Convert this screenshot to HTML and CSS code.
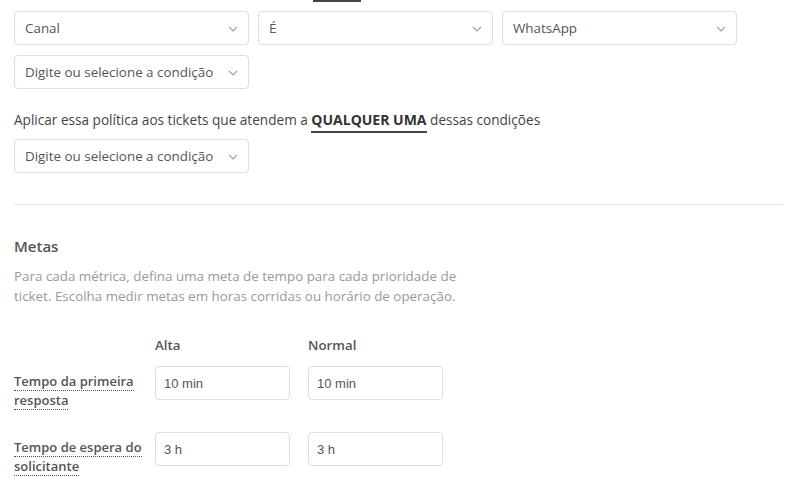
FILE: index.html
```html
<!DOCTYPE html>
<html lang="pt-BR">
<head>
<meta charset="utf-8">
<title>Política de SLA</title>
<link rel="stylesheet" href="styles.css">
</head>
<body>
<div class="page">
  <div class="cut-underline"></div>

  <div class="row first">
    <div class="select"><span>Canal</span><svg class="chev" viewBox="0 0 10 6" width="10" height="6"><path d="M1 1l4 4 4-4" fill="none" stroke="#a0a0a0" stroke-width="1.1"/></svg></div>
    <div class="select"><span>É</span><svg class="chev" viewBox="0 0 10 6" width="10" height="6"><path d="M1 1l4 4 4-4" fill="none" stroke="#a0a0a0" stroke-width="1.1"/></svg></div>
    <div class="select"><span>WhatsApp</span><svg class="chev" viewBox="0 0 10 6" width="10" height="6"><path d="M1 1l4 4 4-4" fill="none" stroke="#a0a0a0" stroke-width="1.1"/></svg></div>
  </div>
  <div class="row">
    <div class="select"><span>Digite ou selecione a condição</span><svg class="chev" viewBox="0 0 10 6" width="10" height="6"><path d="M1 1l4 4 4-4" fill="none" stroke="#a0a0a0" stroke-width="1.1"/></svg></div>
  </div>

  <p class="cond-title">Aplicar essa política aos tickets que atendem a <span class="emph">QUALQUER UMA</span> dessas condições</p>
  <div class="row tight">
    <div class="select"><span>Digite ou selecione a condição</span><svg class="chev" viewBox="0 0 10 6" width="10" height="6"><path d="M1 1l4 4 4-4" fill="none" stroke="#a0a0a0" stroke-width="1.1"/></svg></div>
  </div>

  <hr class="divider">

  <h2 class="section-title">Metas</h2>
  <p class="section-desc">Para cada métrica, defina uma meta de tempo para cada prioridade de ticket. Escolha medir metas em horas corridas ou horário de operação.</p>

  <div class="goals">
    <div class="goal-row head">
      <div class="metric"></div>
      <div class="col-head">Alta</div>
      <div class="col-head">Normal</div>
    </div>
    <div class="goal-row">
      <div class="metric"><span class="dotted">Tempo da primeira resposta</span></div>
      <div class="input">10 min</div>
      <div class="input">10 min</div>
    </div>
    <div class="goal-row">
      <div class="metric"><span class="dotted">Tempo de espera do solicitante</span></div>
      <div class="input">3 h</div>
      <div class="input">3 h</div>
    </div>
  </div>
</div>
</body>
</html>
```

FILE: styles.css
```css
html, body {
  margin: 0;
  padding: 0;
  background: #fff;
}
body {
  font-family: "Open Sans", "Noto Sans", sans-serif;
  color: #555;
  overflow: hidden;
}
.page {
  padding: 0 11px 0 14px;
}
.cut-underline {
  width: 48px;
  height: 2px;
  margin-left: 299px;
  background: #444;
}
.cond-title {
  margin: 20px 0 0 0;
  font-size: 13.6px;
  line-height: 22px;
  color: #444;
}
.emph {
  font-weight: 700;
  font-size: 14px;
  color: #333;
  border-bottom: 2px solid #444;
  padding-bottom: 2px;
}
.row {
  display: flex;
  gap: 9px;
  margin-top: 10px;
}
.row.first {
  margin-top: 9px;
}
.row.tight {
  margin-top: 8px;
}
.select {
  box-sizing: border-box;
  width: 235px;
  height: 34px;
  border: 1px solid #dddddd;
  border-radius: 4px;
  display: flex;
  align-items: center;
  justify-content: space-between;
  padding: 0 10px 0 10px;
  font-size: 13.4px;
  color: #555;
}
.chev {
  display: block;
  margin-top: 1px;
}
.divider {
  border: 0;
  border-top: 1px solid #e6e6e6;
  margin: 31px 0 0 0;
}
.section-title {
  margin: 29px 0 0 0;
  font-size: 15px;
  font-weight: 600;
  line-height: 24px;
  color: #555;
}
.section-desc {
  margin: 8px 0 0 0;
  width: 450px;
  font-size: 13.4px;
  line-height: 20px;
  color: #999;
}
.goals {
  margin-top: 29px;
}
.goal-row {
  display: flex;
  margin-bottom: 22px;
}
.goal-row.head {
  margin-bottom: 11px;
}
.metric {
  box-sizing: border-box;
  width: 141px;
  padding: 6px 4px 0 0;
  font-size: 13px;
  font-weight: 600;
  line-height: 19px;
  color: #555;
}
.dotted {
  border-bottom: 1px dotted #555;
}
.col-head {
  width: 135px;
  font-size: 13.3px;
  font-weight: 600;
  line-height: 20px;
  color: #555;
}
.col-head + .col-head,
.input + .input {
  margin-left: 18px;
}
.input {
  box-sizing: border-box;
  width: 135px;
  height: 34px;
  border: 1px solid #dddddd;
  border-radius: 4px;
  display: flex;
  align-items: center;
  padding: 0 8px;
  font-family: "Liberation Sans", Arial, sans-serif;
  font-size: 13px;
  color: #555;
}
```
